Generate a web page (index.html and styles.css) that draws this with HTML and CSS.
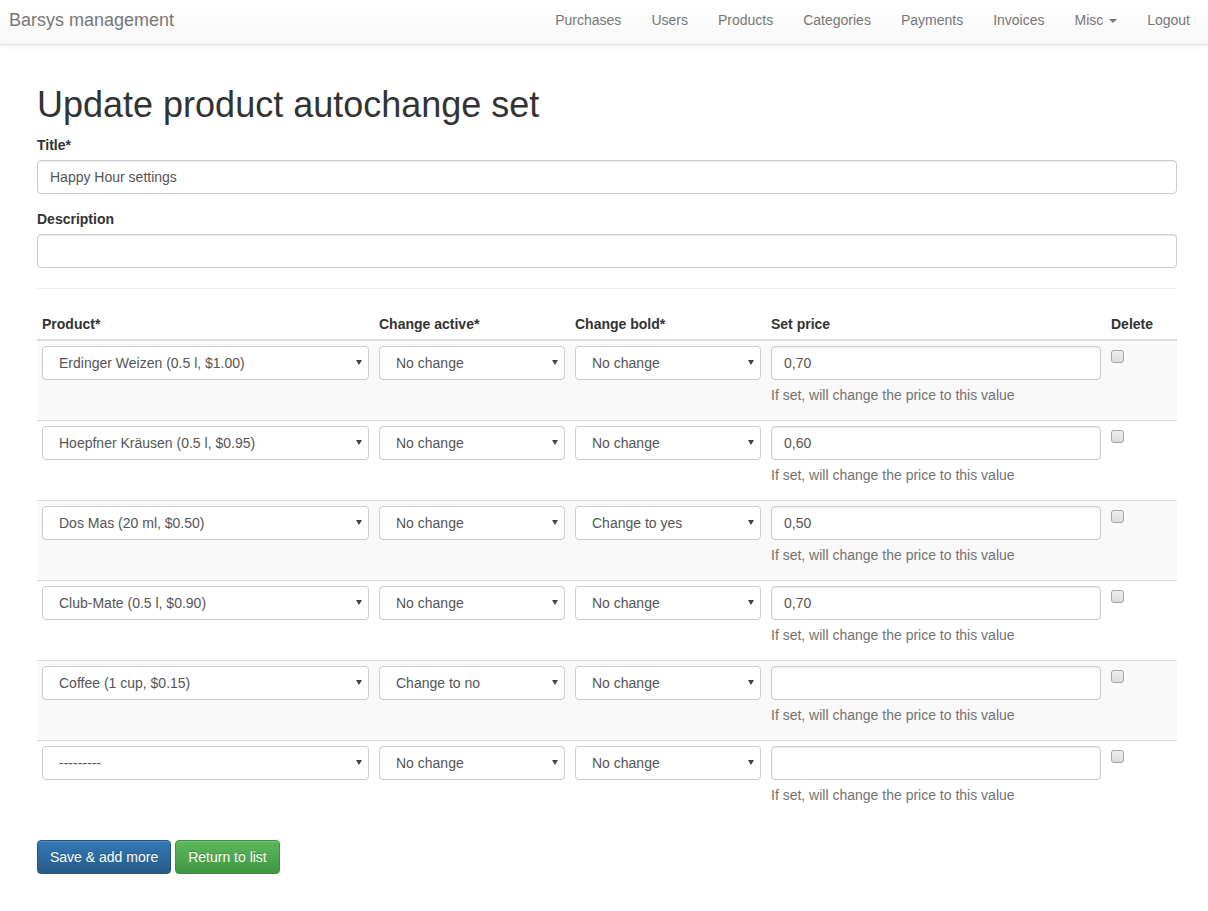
FILE: index.html
```html
<!DOCTYPE html>
<html lang="en">
<head>
<meta charset="utf-8">
<title>Barsys management</title>
<link rel="stylesheet" href="styles.css">
</head>
<body>
<nav class="navbar">
  <a class="brand" href="#">Barsys management</a>
  <ul class="nav">
    <li><a href="#">Purchases</a></li>
    <li><a href="#">Users</a></li>
    <li><a href="#">Products</a></li>
    <li><a href="#">Categories</a></li>
    <li><a href="#">Payments</a></li>
    <li><a href="#">Invoices</a></li>
    <li><a href="#">Misc <span class="caret"></span></a></li>
    <li><a href="#">Logout</a></li>
  </ul>
</nav>
<main class="page">
  <h1>Update product autochange set</h1>
  <form>
    <div class="form-group">
      <label class="label">Title*</label>
      <input class="form-control" type="text" value="Happy Hour settings">
    </div>
    <div class="form-group">
      <label class="label">Description</label>
      <input class="form-control" type="text" value="">
    </div>
    <hr class="divider">
    <table class="table">
      <colgroup>
        <col class="c-product"><col class="c-active"><col class="c-bold"><col class="c-price"><col class="c-delete">
      </colgroup>
      <thead>
        <tr><th>Product*</th><th>Change active*</th><th>Change bold*</th><th>Set price</th><th>Delete</th></tr>
      </thead>
      <tbody>
        <tr>
          <td><div class="select-wrap"><select class="form-control"><option>Erdinger Weizen (0.5 l, $1.00)</option></select></div></td>
          <td><div class="select-wrap"><select class="form-control"><option>No change</option></select></div></td>
          <td><div class="select-wrap"><select class="form-control"><option>No change</option></select></div></td>
          <td><input class="form-control" type="text" value="0,70"><p class="help">If set, will change the price to this value</p></td>
          <td><input class="check" type="checkbox"></td>
        </tr>
        <tr>
          <td><div class="select-wrap"><select class="form-control"><option>Hoepfner Kräusen (0.5 l, $0.95)</option></select></div></td>
          <td><div class="select-wrap"><select class="form-control"><option>No change</option></select></div></td>
          <td><div class="select-wrap"><select class="form-control"><option>No change</option></select></div></td>
          <td><input class="form-control" type="text" value="0,60"><p class="help">If set, will change the price to this value</p></td>
          <td><input class="check" type="checkbox"></td>
        </tr>
        <tr>
          <td><div class="select-wrap"><select class="form-control"><option>Dos Mas (20 ml, $0.50)</option></select></div></td>
          <td><div class="select-wrap"><select class="form-control"><option>No change</option></select></div></td>
          <td><div class="select-wrap"><select class="form-control"><option>Change to yes</option></select></div></td>
          <td><input class="form-control" type="text" value="0,50"><p class="help">If set, will change the price to this value</p></td>
          <td><input class="check" type="checkbox"></td>
        </tr>
        <tr>
          <td><div class="select-wrap"><select class="form-control"><option>Club-Mate (0.5 l, $0.90)</option></select></div></td>
          <td><div class="select-wrap"><select class="form-control"><option>No change</option></select></div></td>
          <td><div class="select-wrap"><select class="form-control"><option>No change</option></select></div></td>
          <td><input class="form-control" type="text" value="0,70"><p class="help">If set, will change the price to this value</p></td>
          <td><input class="check" type="checkbox"></td>
        </tr>
        <tr>
          <td><div class="select-wrap"><select class="form-control"><option>Coffee (1 cup, $0.15)</option></select></div></td>
          <td><div class="select-wrap"><select class="form-control"><option>Change to no</option></select></div></td>
          <td><div class="select-wrap"><select class="form-control"><option>No change</option></select></div></td>
          <td><input class="form-control" type="text" value=""><p class="help">If set, will change the price to this value</p></td>
          <td><input class="check" type="checkbox"></td>
        </tr>
        <tr>
          <td><div class="select-wrap"><select class="form-control"><option>---------</option></select></div></td>
          <td><div class="select-wrap"><select class="form-control"><option>No change</option></select></div></td>
          <td><div class="select-wrap"><select class="form-control"><option>No change</option></select></div></td>
          <td><input class="form-control" type="text" value=""><p class="help">If set, will change the price to this value</p></td>
          <td><input class="check" type="checkbox"></td>
        </tr>
      </tbody>
    </table>
    <div class="actions">
      <button type="button" class="btn btn-primary">Save &amp; add more</button>
      <button type="button" class="btn btn-success">Return to list</button>
    </div>
  </form>
</main>
</body>
</html>
```
FILE: styles.css
```css
* { box-sizing: border-box; }
html, body { margin: 0; padding: 0; }
body {
  font-family: "Liberation Sans", Arial, sans-serif;
  font-size: 14px;
  line-height: 1.42857143;
  color: #333;
  background: #fff;
}
a { text-decoration: none; }

.navbar {
  display: flex;
  justify-content: space-between;
  align-items: flex-start;
  height: 45px;
  padding: 0 3px 0 9px;
  background-image: linear-gradient(to bottom, #fff 0, #f8f8f8 100%);
  border-bottom: 1px solid #e4e4e4;
  box-shadow: inset 0 1px 0 rgba(255,255,255,.15), 0 1px 5px rgba(0,0,0,.075);
}
.brand {
  color: #777;
  font-size: 18px;
  line-height: 20px;
  padding-top: 10px;
}
.nav {
  display: flex;
  list-style: none;
  margin: 0;
  padding: 0;
}
.nav a {
  display: block;
  padding: 10px 15px;
  line-height: 20px;
  color: #777;
}
.caret {
  display: inline-block;
  width: 0;
  height: 0;
  margin-left: 2px;
  vertical-align: middle;
  border-top: 4px solid #777;
  border-left: 4px solid transparent;
  border-right: 4px solid transparent;
}

.page {
  width: 1140px;
  margin-left: 37px;
  padding-top: 20px;
}
h1 {
  font-size: 36px;
  font-weight: 500;
  line-height: 1.1;
  margin: 20px 0 10px;
  color: #333;
}
.form-group { margin-bottom: 15px; }
.label {
  display: block;
  font-weight: bold;
  margin-bottom: 5px;
}
.form-control {
  display: block;
  width: 100%;
  height: 34px;
  padding: 6px 12px;
  font-family: inherit;
  font-size: 14px;
  line-height: 1.42857143;
  color: #555;
  background: #fff;
  border: 1px solid #ccc;
  border-radius: 4px;
  box-shadow: inset 0 1px 1px rgba(0,0,0,.075);
  margin: 0;
}
select.form-control {
  appearance: none;
  -webkit-appearance: none;
  padding-left: 16px;
  padding-right: 20px;
  box-shadow: none;
}
.select-wrap { position: relative; }
.select-wrap::after {
  content: "";
  position: absolute;
  right: 7px;
  top: 14px;
  width: 0;
  height: 0;
  border-top: 5px solid #444;
  border-left: 3px solid transparent;
  border-right: 3px solid transparent;
  pointer-events: none;
}
.divider {
  margin: 20px 0;
  border: 0;
  border-top: 1px solid #eee;
  height: 0;
}
.table {
  width: 100%;
  border-collapse: collapse;
  border-spacing: 0;
  margin-bottom: 20px;
}
.c-product { width: 337px; }
.c-active { width: 196px; }
.c-bold { width: 196px; }
.c-price { width: 340px; }
.c-delete { width: 71px; }
.table th {
  text-align: left;
  font-weight: bold;
  padding: 5px;
  line-height: 20px;
  vertical-align: bottom;
  border-bottom: 2px solid #ddd;
}
.table td {
  padding: 5px;
  vertical-align: top;
  border-top: 1px solid #ddd;
}
.table tbody tr:nth-child(odd) td { background: #f9f9f9; }
.help {
  margin: 5px 0 10px;
  color: #737373;
  line-height: 20px;
}
.check {
  appearance: none;
  -webkit-appearance: none;
  display: block;
  width: 13px;
  height: 13px;
  margin: 4px 0 0 0;
  border: 1px solid #a6a6a6;
  border-radius: 3px;
  background: linear-gradient(to bottom, #f0f0f0, #dadada);
}

.actions { display: flex; gap: 4px; }
.btn {
  display: inline-block;
  padding: 6px 12px;
  font-family: inherit;
  font-size: 14px;
  line-height: 20px;
  border: 1px solid transparent;
  border-radius: 4px;
  color: #fff;
  text-shadow: 0 -1px 0 rgba(0,0,0,.2);
  box-shadow: inset 0 1px 0 rgba(255,255,255,.15), 0 1px 1px rgba(0,0,0,.075);
  cursor: pointer;
}
.btn-primary {
  background-image: linear-gradient(to bottom, #337ab7 0, #265a88 100%);
  border-color: #245580;
}
.btn-success {
  background-image: linear-gradient(to bottom, #5cb85c 0, #419641 100%);
  border-color: #3e8f3e;
}
```
